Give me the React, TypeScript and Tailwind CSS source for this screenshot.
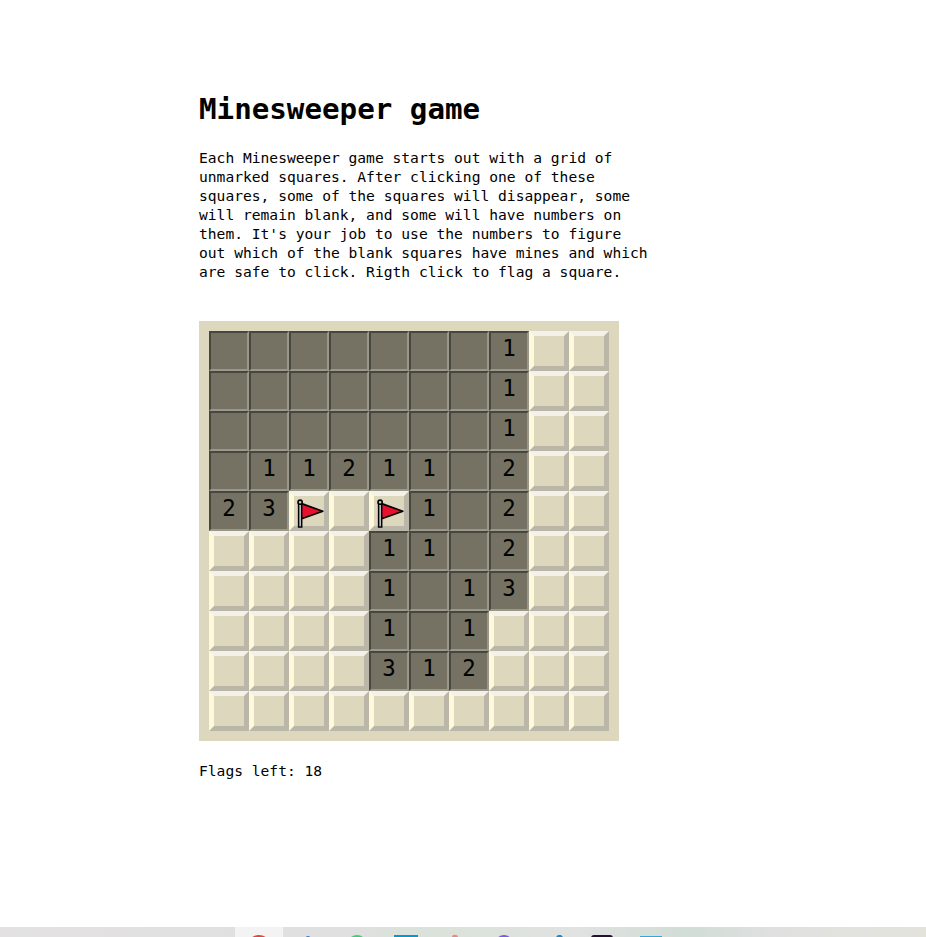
const rows = [
  ".......1##",
  ".......1##",
  ".......1##",
  ".11211.2##",
  "23F#F1.2##",
  "####11.2##",
  "####1.13##",
  "####1.1###",
  "####312###",
  "##########",
];

const lines = [
  "Each Minesweeper game starts out with a grid of",
  "unmarked squares. After clicking one of these",
  "squares, some of the squares will disappear, some",
  "will remain blank, and some will have numbers on",
  "them. It's your job to use the numbers to figure",
  "out which of the blank squares have mines and which",
  "are safe to click. Rigth click to flag a square.",
];

function Flag() {
  return (
    <svg width="30" height="30" viewBox="0 2 30 30" className="mt-0.5 block">
      <path d="M7 7.4 L28.8 15.3 L7 23 Z" fill="#e8112d" stroke="#000" strokeWidth="1.7" strokeLinejoin="round" />
      <path d="M4.6 7 V31 H7.7 V7" fill="#c4c4c4" stroke="#000" strokeWidth="1.5" />
      <circle cx="6.1" cy="6.2" r="2.1" fill="#c4c4c4" stroke="#000" strokeWidth="1.6" />
    </svg>
  );
}

function Cell({ value }: { value: string }) {
  if (value === "#" || value === "F") {
    return (
      <div className="h-10 w-10 border-5 border-t-[#f4f1e9] border-r-[#bab6a8] border-b-[#bab6a8] border-l-[#fff9db] bg-[#ddd7bd]">
        {value === "F" && <Flag />}
      </div>
    );
  }
  return (
    <div className="flex h-10 w-10 justify-center border-2 border-t-[#48473f] border-r-[#9a988b] border-b-[#9a988b] border-l-[#48473f] bg-[#757263] text-[22.4px] leading-[30px]">
      {value === "." ? "" : value}
    </div>
  );
}

function Taskbar() {
  return (
    <svg width="926" height="10" viewBox="0 0 926 10" className="block">
      <defs>
        <linearGradient id="bar">
          <stop offset="0" stopColor="#e3e1e2" />
          <stop offset=".36" stopColor="#e0e0e0" />
          <stop offset=".47" stopColor="#dae2da" />
          <stop offset=".62" stopColor="#e1e2e1" />
          <stop offset=".74" stopColor="#d1ddd7" />
          <stop offset=".84" stopColor="#e0e0e0" />
          <stop offset="1" stopColor="#e3e3dc" />
        </linearGradient>
      </defs>
      <rect width="926" height="10" fill="url(#bar)" />
      <rect x="235" width="48" height="10" fill="#f3f3f3" />
      <circle cx="259" cy="20" r="12" fill="#e1483c" />
      <circle cx="308" cy="11.5" r="2.5" fill="#3b78cf" />
      <circle cx="357" cy="18" r="10" fill="#40cc78" />
      <rect x="394" y="8" width="24" height="2" fill="#0099d8" />
      <circle cx="455" cy="11" r="3.2" fill="#ef8585" />
      <circle cx="504" cy="17" r="9" fill="#8157df" />
      <path d="M556 10 L558 8 H561 L563 10 Z" fill="#168bd0" />
      <rect x="591" y="8" width="22" height="10" rx="3" fill="#260f35" />
      <rect x="640" y="9" width="22" height="1" fill="#31a8dc" />
    </svg>
  );
}

export default function App() {
  return (
    <div className="flex h-[937px] w-[926px] flex-col justify-between overflow-hidden bg-white font-['DejaVu_Sans_Mono','Liberation_Mono',monospace] text-black">
      <main className="ml-[199px] w-[460px] pt-[90px]">
        <h1 className="text-[29.2px] leading-[38px] font-bold whitespace-nowrap">Minesweeper game</h1>
        <p className="mt-5 text-[14.61px] leading-[19px] whitespace-nowrap">
          {lines.map((line) => (
            <span key={line} className="block">{line}</span>
          ))}
        </p>
        <div className="mt-10 grid w-[420px] grid-cols-10 bg-[#ddd7bd] p-[10px]">
          {rows.flatMap((row, y) => row.split("").map((value, x) => <Cell key={`${y}-${x}`} value={value} />))}
        </div>
        <p className="mt-5 text-[14.61px] leading-[19px]">Flags left: 18</p>
      </main>
      <Taskbar />
    </div>
  );
}
